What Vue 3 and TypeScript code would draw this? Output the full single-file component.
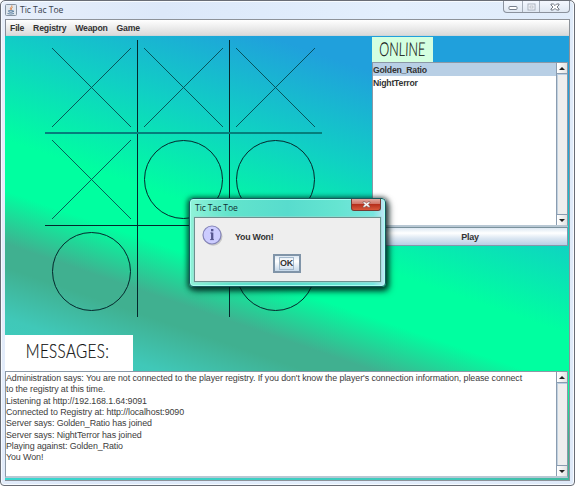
<script setup lang="ts">
const menus: string[] = ['File', 'Registry', 'Weapon', 'Game']
const players: string[] = ['Golden_Ratio', 'NightTerror']
const messages: string[] = [
  "Administration says: You are not connected to the player registry. If you don't know the player's connection information, please connect",
  'to the registry at this time.',
  'Listening at http://192.168.1.64:9091',
  'Connected to Registry at: http://localhost:9090',
  'Server says: Golden_Ratio has joined',
  'Server says: NightTerror has joined',
  'Playing against: Golden_Ratio',
  'You Won!',
]
interface Cell { x: number; y: number }
const crosses: Cell[] = [{ x: 47, y: 11 }, { x: 139, y: 11 }, { x: 231, y: 11 }, { x: 47, y: 103 }]
const noughts: Cell[] = [{ x: 139, y: 103 }, { x: 231, y: 103 }, { x: 47, y: 195 }, { x: 231, y: 195 }]
</script>

<template>
  <div class="window">
    <header class="titlebar">
      <svg class="java" width="12" height="12" viewBox="0 0 12 12">
        <rect x=".5" y=".5" width="11" height="11" rx="1" fill="#dfe7ee" stroke="#8794a3" />
        <path d="M6.8 1.5C7.5 3 4.5 3.7 5.5 5.6M7.5 3.5C6.2 4.3 6.2 5 6.7 5.8" fill="none" stroke="#e27b32" stroke-width="1" />
        <path d="M3.5 6.7h4.2v1.2q-2 1-3.8 0zM7.8 6.8q1.8 0 .2 1.4M2.5 9.5q3.5 1.2 6.5 0" fill="none" stroke="#55799c" stroke-width=".9" />
      </svg>
      <span class="caption">Tic Tac Toe</span>
      <div class="controls">
        <span class="ctl min"><svg width="10" height="8" viewBox="0 0 10 8"><rect x="1" y="3.5" width="8" height="3" rx=".8" fill="#fff" stroke="#777f8c" /></svg></span>
        <span class="ctl max"><svg width="9" height="8" viewBox="0 0 9 8"><rect x="1" y="1" width="7" height="6" fill="#f8faff" stroke="#aab2be" /><rect x="3" y="3" width="3" height="2" fill="#fff" stroke="#aab2be" stroke-width=".8" /></svg></span>
        <span class="ctl close"><svg width="10" height="8" viewBox="0 0 10 8"><path d="M1 1h2.4L5 2.6 6.6 1H9v1L7 4l2 2v1H6.6L5 5.4 3.4 7H1V6l2-2-2-2z" fill="#fff" stroke="#666d78" stroke-width=".9" /></svg></span>
      </div>
    </header>
    <div class="client">
      <nav class="menubar"><span v-for="m in menus" :key="m">{{ m }}</span></nav>
      <main class="content">
        <div class="upper">
          <section class="left">
            <svg class="board" width="367" height="298" viewBox="0 0 367 298">
              <g fill="none" stroke="#04282c" stroke-width="1">
                <path d="M132.5 3V280M224.5 3V280" />
                <path d="M40 188.5H317" />
                <path d="M40 96H317" stroke="#057f7c" stroke-width="2" />
                <path v-for="c in crosses" :key="`x${c.x}-${c.y}`" :d="`M${c.x} ${c.y}l79 79m0 -79l-79 79`" stroke="#06484f" stroke-width=".9" />
                <circle v-for="c in noughts" :key="`o${c.x}-${c.y}`" :cx="c.x + 39.5" :cy="c.y + 39.5" r="39" />
              </g>
            </svg>
            <div class="messages-label"><span>MESSAGES:</span></div>
          </section>
          <aside class="right">
            <div class="online-label"><span>ONLINE</span></div>
            <div class="pane players">
              <ul class="list"><li v-for="(p, i) in players" :key="p" :class="{ selected: i === 0 }">{{ p }}</li></ul>
              <div class="scroll"><i class="arrow up"></i><i class="track"></i><i class="arrow down"></i></div>
            </div>
            <button class="play">Play</button>
          </aside>
        </div>
        <div class="pane log">
          <div class="lines"><p v-for="m in messages" :key="m">{{ m }}</p></div>
          <div class="scroll"><i class="arrow up"></i><i class="track"></i><i class="arrow down"></i></div>
        </div>
      </main>
    </div>
    <div class="dialog">
      <div class="dialog-title">
        <span>Tic Tac Toe</span>
        <div class="dialog-close"><svg width="9" height="7" viewBox="0 0 10 8"><path d="M1 1h2.4L5 2.6 6.6 1H9v1L7 4l2 2v1H6.6L5 5.4 3.4 7H1V6l2-2-2-2z" fill="#fff" stroke="#70504e" stroke-width=".7" /></svg></div>
      </div>
      <div class="dialog-body">
        <div class="notice">
          <svg width="22" height="23" viewBox="0 0 22 23">
            <circle cx="11.2" cy="11.5" r="9.3" fill="#aaa" opacity=".55" />
            <circle cx="10" cy="10" r="9" fill="#ccccff" stroke="#8484b8" stroke-width="1.2" />
            <path d="M8.2 8h2M8 14.6h4" fill="none" stroke="#56568f" stroke-width=".9" />
            <path d="M10.2 7.6v7.4" stroke="#56568f" stroke-width="2.3" />
            <rect x="9" y="4" width="2.4" height="2.3" fill="#56568f" />
          </svg>
          <span>You Won!</span>
        </div>
        <button class="ok"><span>OK</span></button>
      </div>
    </div>
  </div>
</template>

<style>
body { margin: 0; background: #fff; overflow: hidden; }
</style>

<style scoped>
* { box-sizing: border-box; }
.window {
  position: relative; width: 575px; height: 486px; padding: 0 4px 4px;
  border: 1px solid #696d76; border-radius: 5px 5px 4px 4px;
  background: linear-gradient(100deg, #e8effb 0, #dce8f9 25%, #e3effd 60%, #dfeaf9 100%);
  box-shadow: inset 0 0 0 1px #f7fbff;
  font-family: "Liberation Sans", Arial, sans-serif; font-size: 9px; color: #333;
}
.titlebar { display: flex; height: 18px; align-items: flex-start; }
.java { margin: 3px 3px 0 0; flex: none; }
.caption { flex: 1; padding-top: 3px; font: 8.6px/12px "Open Sans", sans-serif; letter-spacing: -.05px; color: #38414d; }
.controls { display: flex; height: 12px; border: 1px solid #8b929d; border-top: 0; border-radius: 0 0 4px 4px; background: linear-gradient(#f4f8ff, #dfe7f2); }
.ctl { display: flex; align-items: center; justify-content: center; height: 11px; width: 18px; }
.ctl + .ctl { border-left: 1px solid #a4acb8; }
.max { width: 17px; }
.close { width: 30px; }
.client { height: 462px; border: 1px solid #8d9299; border-left-color: #868c98; display: flex; flex-direction: column; }
.menubar { height: 16px; flex: none; display: flex; gap: 8.8px; padding-left: 4px; line-height: 16px; font-weight: bold; font-size: 8.7px; letter-spacing: -.18px; color: #333; background: linear-gradient(#fff, #dadada); border-bottom: 1px solid #ccd5d8; }
.content {
  flex: 1; min-height: 0; display: flex; flex-direction: column; padding: 0 1px 2px 0; margin-left: -1px;
  background: linear-gradient(199deg, #20a0dc 0, #20a0dc 98px, #10d0c4 192px, #00ffa0 282px, #00ffa0 330px, #40b090 380px, #40b090 402px, #40c8b8 450px, #38d8d0 100%);
}
.upper { height: 335px; flex: none; display: flex; }
.left { width: 367px; flex: none; display: flex; flex-direction: column; }
.board { display: block; margin-top: 1px; flex: none; }
.messages-label { width: 128px; height: 36px; background: #fff; color: #111; display: flex; align-items: center; justify-content: center; }
.messages-label span { font: 300 17.5px/20px Lato, sans-serif; letter-spacing: .4px; transform: translate(-1.5px, -1px) scale(.87, 1.08); white-space: nowrap; -webkit-text-stroke: .2px #111; }
.right { flex: 1; display: flex; flex-direction: column; padding-top: 1px; }
.online-label { width: 61px; height: 25px; background: #d4ffe0; color: #111; display: flex; align-items: center; justify-content: center; }
.online-label span { font: 300 18px/20px Lato, sans-serif; transform: translate(-.5px, -1px) scale(.7, 1.06) skewX(-3deg); white-space: nowrap; -webkit-text-stroke: .2px #111; }
.pane { display: flex; background: #fff; border: 1px solid #8b98a6; border-bottom: 2px solid #b8c8d4; }
.players { height: 165px; flex: none; }
.list { flex: 1; margin: 0; padding: 0; list-style: none; font-size: 8.7px; font-weight: bold; line-height: 14px; letter-spacing: -.22px; }
.list li { height: 13px; }
.selected { background: #b8cfe5; }
.scroll { width: 11px; flex: none; display: flex; flex-direction: column; border-left: 1px solid #8a9cb0; background: #eee; }
.arrow { height: 11px; flex: none; display: flex; align-items: center; justify-content: center; background: linear-gradient(90deg, #fff, #e3e3e3); }
.arrow::before { content: ""; border: 3px solid transparent; }
.up { border-bottom: 1px solid #8a9cb0; }
.up::before { border-top: 0; border-bottom-color: #222; }
.down { border-top: 1px solid #8a9cb0; }
.down::before { border-bottom: 0; border-top-color: #222; }
.track { flex: 1; border-left: 1px solid #c1d1e0; border-top: 1px solid #b8cfe5; }
.play { height: 19px; padding: 0; border: 1px solid #8397ab; border-top-color: #7b929d; font: bold 9px/16px "Liberation Sans", sans-serif; letter-spacing: -.2px; color: #333; background: linear-gradient(#dde8f3 0, #fff 30%, #dce7f2 60%, #b8cfe5 100%); margin-bottom: auto; }
.log { flex: 1; min-height: 0; }
.lines { flex: 1; color: #3c3c3c; padding-top: 1px; }
.lines p { margin: 0; font-size: 8.9px; letter-spacing: -.085px; line-height: 11.35px; white-space: nowrap; }
.dialog {
  position: absolute; left: 188px; top: 197px; width: 197px; height: 89px; padding: 0 4px 4px;
  border: 1px solid #16585c; border-radius: 4px;
  background: linear-gradient(90deg, #90f2d8 0, #62e4cc 20%, #58dccd 50%, #65e4d1 75%, #78e5df 94%, #c6e5f6 100%);
  box-shadow: inset 0 0 0 1px #a8fff0, 0 1px 5px 2px rgba(0, 25, 25, .65), 3px 4px 7px rgba(0, 20, 20, .6);
  display: flex; flex-direction: column;
}
.dialog-title { height: 18px; flex: none; display: flex; justify-content: space-between; padding-left: 1px; font: 8.6px/18px "Open Sans", sans-serif; letter-spacing: -.1px; color: #102f32; }
.dialog-close { width: 30px; height: 12px; display: flex; align-items: center; justify-content: center; border: 1px solid #743b35; border-top: 0; border-radius: 0 0 3px 3px; background: linear-gradient(#e2aaa0 0, #cf7365 45%, #b6301c 50%, #d8593b 100%); }
.dialog-body { flex: 1; background: #eee; border: 1px solid #6d918f; box-shadow: 0 0 0 .5px #9fd8d0; display: flex; flex-direction: column; align-items: center; }
.notice { width: 100%; display: flex; align-items: flex-start; gap: 11px; padding: 7px 0 0 7px; height: 36px; font-weight: bold; font-size: 8.8px; line-height: 24px; letter-spacing: -.22px; }
.ok { width: 28px; height: 19px; margin-right: 2px; padding: 0; border: 2px solid #8094a8; background: linear-gradient(#dde8f3, #fff 35%, #c6d8e9 100%); font: bold 9px/11px "Liberation Sans", sans-serif; letter-spacing: -.3px; color: #333; display: flex; align-items: center; justify-content: center; }
.ok span { border: 1px solid #a3b8cc; }
</style>
